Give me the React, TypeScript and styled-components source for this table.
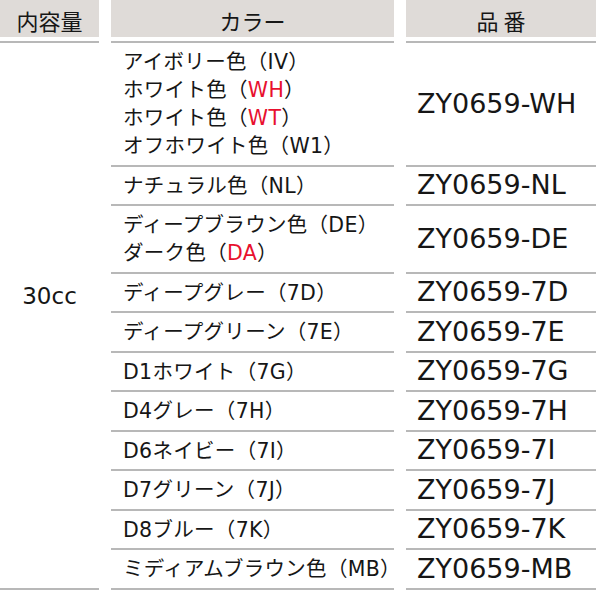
import styled, { createGlobalStyle } from "styled-components";

const GlobalStyle = createGlobalStyle`
  html, body {
    margin: 0;
    padding: 0;
    background: #fff;
  }
  body {
    font-family: "DejaVu Sans", "Noto Sans CJK JP", sans-serif;
    color: #161616;
  }
`;

const Table = styled.div`
  display: grid;
  grid-template-columns: 99px 283px 1fr;
  column-gap: 12px;
  width: 596px;
`;

// header cell: grey block, small white gap, then the grey rule
const Head = styled.div`
  padding-bottom: 4px;
  border-bottom: 2px solid #b8b8b8;
`;

const HeadLabel = styled.div`
  height: 37px;
  background: #dfdbd8;
  display: flex;
  align-items: center;
  justify-content: center;
  padding-top: 3px;
  box-sizing: border-box;
  font-family: "Noto Sans CJK JP", sans-serif;
  font-size: 22px;
  line-height: 1;
`;

const Volume = styled.div<{ $rows: number }>`
  grid-column: 1;
  grid-row: 2 / span ${(p) => p.$rows};
  display: flex;
  align-items: center;
  justify-content: center;
  padding-bottom: 38px;
  border-bottom: 2px solid #b8b8b8;
  font-family: "DejaVu Sans", sans-serif;
  font-size: 23px;
`;

const ColorCell = styled.div`
  grid-column: 2;
  padding: 5px 12px 4.5px;
  border-bottom: 2px solid #b8b8b8;
  font-size: 20.5px;
  line-height: 28px;
  letter-spacing: 0.3px;
`;

const Line = styled.div`
  white-space: nowrap;
`;

const Red = styled.span`
  color: #e8102e;
`;

const CodeCell = styled.div`
  grid-column: 3;
  display: flex;
  align-items: center;
  padding-left: 11px;
  border-bottom: 2px solid #b8b8b8;
  font-family: "DejaVu Sans", sans-serif;
  font-size: 27px;
  line-height: 28px;
  white-space: nowrap;
`;

type Part = string | { red: string };
type Row = { lines: Part[][]; code: string };

const rows: Row[] = [
  {
    lines: [
      ["アイボリー色（IV）"],
      ["ホワイト色（", { red: "WH" }, "）"],
      ["ホワイト色（", { red: "WT" }, "）"],
      ["オフホワイト色（W1）"],
    ],
    code: "ZY0659-WH",
  },
  { lines: [["ナチュラル色（NL）"]], code: "ZY0659-NL" },
  {
    lines: [["ディープブラウン色（DE）"], ["ダーク色（", { red: "DA" }, "）"]],
    code: "ZY0659-DE",
  },
  { lines: [["ディープグレー（7D）"]], code: "ZY0659-7D" },
  { lines: [["ディープグリーン（7E）"]], code: "ZY0659-7E" },
  { lines: [["D1ホワイト（7G）"]], code: "ZY0659-7G" },
  { lines: [["D4グレー（7H）"]], code: "ZY0659-7H" },
  { lines: [["D6ネイビー（7I）"]], code: "ZY0659-7I" },
  { lines: [["D7グリーン（7J）"]], code: "ZY0659-7J" },
  { lines: [["D8ブルー（7K）"]], code: "ZY0659-7K" },
  { lines: [["ミディアムブラウン色（MB）"]], code: "ZY0659-MB" },
];

const App = () => {
  return (
    <>
      <GlobalStyle />
      <Table>
        <Head>
          <HeadLabel>内容量</HeadLabel>
        </Head>
        <Head>
          <HeadLabel>カラー</HeadLabel>
        </Head>
        <Head>
          <HeadLabel>品 番</HeadLabel>
        </Head>

        <Volume $rows={rows.length}>30cc</Volume>

        {rows.flatMap((row, i) => [
          <ColorCell key={`c${i}`}>
            {row.lines.map((parts, j) => (
              <Line key={j}>
                {parts.map((p, k) =>
                  typeof p === "string" ? p : <Red key={k}>{p.red}</Red>
                )}
              </Line>
            ))}
          </ColorCell>,
          <CodeCell key={`p${i}`}>{row.code}</CodeCell>,
        ])}
      </Table>
    </>
  );
};

export default App;
